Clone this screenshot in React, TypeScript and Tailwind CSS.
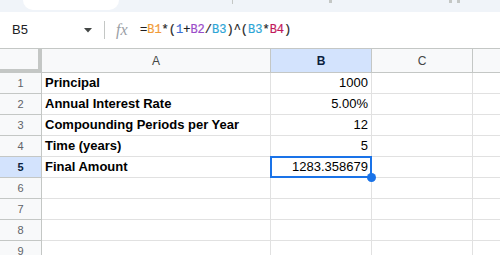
import React from "react";

const rows: { n: number; a: string; b: string }[] = [
  { n: 1, a: "Principal", b: "1000" },
  { n: 2, a: "Annual Interest Rate", b: "5.00%" },
  { n: 3, a: "Compounding Periods per Year", b: "12" },
  { n: 4, a: "Time (years)", b: "5" },
  { n: 5, a: "Final Amount", b: "1283.358679" },
  { n: 6, a: "", b: "" },
  { n: 7, a: "", b: "" },
  { n: 8, a: "", b: "" },
  { n: 9, a: "", b: "" },
];

export default function App() {
  return (
    <div
      className="w-[500px] h-[255px] overflow-hidden bg-white text-[#202124]"
      style={{ fontFamily: '"Liberation Sans", Arial, sans-serif' }}
    >
      {/* top strip */}
      <div className="h-[12px] bg-[#f0f4f9] flex items-start">
        <div className="ml-[23px] w-[96px] h-[10px] bg-white rounded-b-[10px]" />
        <div className="ml-[113px] w-px h-[4px] bg-[#c4c7c5]" />
        <div className="ml-[96px] w-[3px] h-[3px] bg-[#c4c7c5]" />
        <div className="ml-[117px] w-[3px] h-[3px] bg-[#c4c7c5]" />
        <div className="ml-[5px] w-[3px] h-[3px] bg-[#c4c7c5]" />
      </div>
      {/* formula bar */}
      <div className="h-[36px] flex items-center bg-white">
        <div className="w-[84px] pl-[12px] text-[13px] text-[#202124]">B5</div>
        <svg width="8" height="5" viewBox="0 0 8 5">
          <path d="M0 0 L8 0 L4 4.5 Z" fill="#444746" />
        </svg>
        <div className="ml-[12px] w-px h-[18px] bg-[#c4c7c5]" />
        <div
          className="ml-[11px] w-[17px] text-[16px] italic text-[#9aa0a6] leading-none"
          style={{ fontFamily: '"Liberation Serif", "Times New Roman", serif' }}
        >
          fx
        </div>
        <div
          className="ml-[7px] text-[12px] text-[#1f1f1f] whitespace-pre [-webkit-text-stroke:0.2px]"
          style={{ fontFamily: '"Liberation Mono", "Courier New", monospace' }}
        >
          <span>=</span>
          <span className="text-[#f29b37]">B1</span>
          <span>*(</span>
          <span className="text-[#3b6fd6]">1</span>
          <span>+</span>
          <span className="text-[#9b4cc9]">B2</span>
          <span>/</span>
          <span className="text-[#2ba5d6]">B3</span>
          <span>)^(</span>
          <span className="text-[#2ba5d6]">B3</span>
          <span>*</span>
          <span className="text-[#c2185b]">B4</span>
          <span>)</span>
        </div>
      </div>
      {/* grid */}
      <div className="grid grid-cols-[42px_229px_101px_101px_27px] border-t border-[#c4c7c5]">
        <div className="h-[24px] bg-[#f8f9fa] border-r-[4px] border-b-[4px] border-[#c4c7c5]" />
        <div className="h-[24px] bg-[#f8f9fa] border-r border-b border-[#c4c7c5] flex items-center justify-center text-[12px] text-[#444746]">
          A
        </div>
        <div className="h-[24px] bg-[#d3e3fd] border-r border-b border-[#c4c7c5] flex items-center justify-center text-[12px] text-[#0b1f3f] font-bold">
          B
        </div>
        <div className="h-[24px] bg-[#f8f9fa] border-r border-b border-[#c4c7c5] flex items-center justify-center text-[12px] text-[#444746]">
          C
        </div>
        <div className="h-[24px] bg-[#f8f9fa] border-b border-[#c4c7c5]" />
        {rows.map((r) => {
          const sel = r.n === 5;
          return (
            <React.Fragment key={r.n}>
              <div
                className={
                  sel
                    ? "h-[21px] bg-[#d3e3fd] border-r border-b border-[#c4c7c5] flex items-center justify-center text-[11px] font-bold text-[#0b1f3f]"
                    : "h-[21px] bg-[#f8f9fa] border-r border-b border-[#c4c7c5] flex items-center justify-center text-[11px] text-[#5f6368]"
                }
              >
                {r.n}
              </div>
              <div className="h-[21px] border-r border-b border-[#e1e1e1] flex items-center px-[3px] text-[13px] font-bold text-black whitespace-nowrap overflow-hidden">
                {r.a}
              </div>
              <div className={sel ? "relative z-10 h-[21px] border-r border-b border-[#e1e1e1] flex items-center justify-end px-[3px] text-[13px] text-black" : "h-[21px] border-r border-b border-[#e1e1e1] flex items-center justify-end px-[3px] text-[13px] text-black"}>
                {r.b}
                {sel && (
                  <>
                    <div className="absolute -left-px -top-px -right-px -bottom-px border-2 border-[#1a73e8]" />
                    <div className="absolute -right-[5px] -bottom-[5px] w-[9px] h-[9px] rounded-full bg-[#1a73e8]" />
                  </>
                )}
              </div>
              <div className="h-[21px] border-r border-b border-[#e1e1e1]" />
              <div className="h-[21px] border-b border-[#e1e1e1]" />
            </React.Fragment>
          );
        })}
      </div>
    </div>
  );
}
